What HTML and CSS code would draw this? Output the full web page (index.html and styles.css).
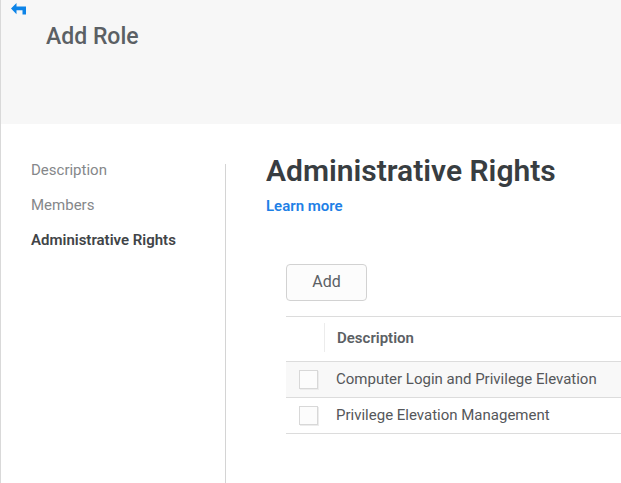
FILE: index.html
```html
<!DOCTYPE html>
<html lang="en">
<head>
<meta charset="utf-8">
<title>Add Role</title>
<link rel="stylesheet" href="styles.css">
</head>
<body>
<div class="page">
  <header class="header">
    <a class="back" href="#" aria-label="Back">
      <svg width="16" height="12" viewBox="0 0 16 12" aria-hidden="true"><path d="M0 5.500 5.500 0v3.500H15V11.500h-3.500V7.300h-6v4z" fill="#0d84e8"/></svg>
    </a>
    <h1 class="header-title">Add Role</h1>
  </header>
  <div class="body">
    <nav class="nav">
      <a class="nav-link" href="#">Description</a>
      <a class="nav-link" href="#">Members</a>
      <a class="nav-link nav-link-active" href="#" aria-current="page">Administrative Rights</a>
    </nav>
    <main class="content">
      <h2 class="title">Administrative Rights</h2>
      <a class="learn" href="#">Learn more</a>
      <div class="panel">
        <button class="add" type="button">Add</button>
        <table class="rights">
          <thead>
            <tr><th class="check-cell"><span class="separator"></span></th><th>Description</th></tr>
          </thead>
          <tbody>
            <tr><td class="check-cell"><input class="check" type="checkbox" id="login"></td><td><label for="login">Computer Login and Privilege Elevation</label></td></tr>
            <tr><td class="check-cell"><input class="check" type="checkbox" id="manage"></td><td><label for="manage">Privilege Elevation Management</label></td></tr>
          </tbody>
        </table>
      </div>
    </main>
  </div>
</div>
</body>
</html>
```
FILE: styles.css
```css
* {
  box-sizing: border-box;
}

body {
  margin: 0;
  font-family: Roboto, "Liberation Sans", sans-serif;
  font-size: 15px;
  color: #55575a;
  background: #fff;
}

a {
  text-decoration: none;
}

.page {
  display: flex;
  flex-direction: column;
  min-height: 100vh;
  border-left: 1px solid #d9d9d9;
}

.header {
  padding: 3px 10px 74px;
  background: #f7f7f7;
}

.back {
  display: block;
  height: 21px;
}

.back svg {
  display: block;
}

.header-title {
  margin: 0;
  padding-left: 35px;
  font-size: 23px;
  line-height: 26px;
  font-weight: 500;
  color: #5b6064;
}

.body {
  display: flex;
  flex: 1;
  padding-top: 40px;
}

.nav {
  flex: none;
  width: 225px;
  padding-left: 30px;
  border-right: 1px solid #d4d4d4;
}

.nav-link {
  display: block;
  height: 35px;
  line-height: 12px;
  color: #85878a;
}

.nav-link-active {
  font-weight: 600;
  color: #414447;
}

.content {
  flex: 1;
  min-width: 0;
  padding-left: 40px;
}

.title {
  margin: -10px 0 0;
  font-size: 30px;
  line-height: 34px;
  font-weight: 600;
  color: #383d41;
}

.learn {
  display: block;
  margin-top: 10px;
  line-height: 16px;
  font-weight: 600;
  color: #1e80e6;
}

.panel {
  padding: 50px 0 0 20px;
}

.add {
  display: block;
  width: 81px;
  height: 37px;
  padding: 0 0 3px;
  border: 1px solid #d2d2d2;
  border-radius: 4px;
  background: #fcfcfc;
  font: 16px Roboto, "Liberation Sans", sans-serif;
  color: #5b6064;
}

.rights {
  width: 100%;
  margin-top: 15px;
  border-collapse: separate;
  border-spacing: 0;
  border-top: 1px solid #dcdcdc;
}

.rights th,
.rights td {
  height: 36px;
  padding: 0 0 0 12px;
  border-bottom: 1px solid #dcdcdc;
  text-align: left;
}

.rights td {
  padding: 0 0 1px 11px;
}

.rights th {
  height: 45px;
  padding-bottom: 3px;
  font-weight: 600;
  color: #5b6064;
}

.rights .check-cell {
  width: 39px;
  padding-left: 13px;
}

.separator {
  display: block;
  height: 29px;
  border-right: 1px solid #ececec;
}

.rights tbody tr:first-child {
  background: #f8f8f8;
}

.check {
  display: block;
  appearance: none;
  width: 19px;
  height: 19px;
  margin: 0;
  border: 1px solid #d8d8d8;
  background: #fcfcfc;
  box-shadow: 1px 1px 0 #ececec;
}
```
